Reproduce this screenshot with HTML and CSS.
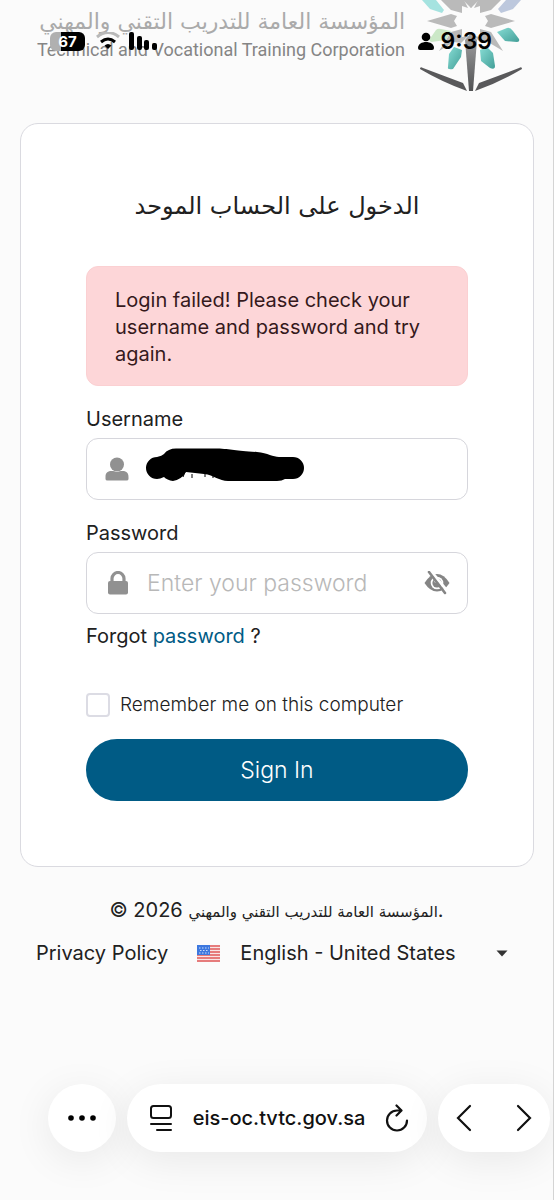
FILE: index.html
```html
<!DOCTYPE html>
<html lang="en">
<head>
<meta charset="utf-8">
<meta name="viewport" content="width=device-width, initial-scale=1">
<title>Sign In</title>
<link rel="stylesheet" href="styles.css">
</head>
<body class="page">
<div class="status-bar">
  <div class="status-left">
    <span class="battery">67</span>
    <svg class="wifi" width="24" height="18" viewBox="0 0 24 18" fill="none" stroke-width="3"><path d="M1 5Q12-4 23 5" stroke="#b9b9b9"/><path d="M5 10Q12 4 19 10" stroke="#000"/><path d="M8.500 13.500Q12 10.500 15.500 13.500L12 17z" fill="#000"/></svg>
    <svg class="signal" width="30" height="18" viewBox="0 0 30 18"><g fill="#000"><rect x="1" width="5" height="18" rx="2"/><rect x="9" y="4" width="5" height="14" rx="2"/><rect x="16" y="8" width="5" height="10" rx="2"/><rect x="24" y="11" width="5" height="7" rx="2"/></g></svg>
  </div>
  <div class="status-right">
    <svg width="16" height="18" viewBox="0 0 16 18"><circle cx="8" cy="5" r="4.300"/><path d="M0 16c0-8 16-8 16 0q0 2-2 2H2q-2 0-2-2z"/></svg>
    <span class="clock">9:39</span>
  </div>
</div>

<header class="site-header">
  <div class="org-name">
    <span class="org-ar" lang="ar" dir="rtl">المؤسسة العامة للتدريب التقني والمهني</span>
    <span class="org-en">Technical and Vocational Training Corporation</span>
  </div>
  <svg class="org-logo" width="104" height="92" viewBox="419 0 104 92" role="img" aria-label="TVTC logo">
    <defs>
      <linearGradient id="grey" x1="0" y1="0" x2="0" y2="1"><stop stop-color="#a5a5a6"/><stop offset="1" stop-color="#505153"/></linearGradient>
      <linearGradient id="teal" x1="0" y1="0" x2="1" y2="1"><stop stop-color="#87dcd4"/><stop offset="1" stop-color="#439f98"/></linearGradient>
      <g id="half" fill="#bababa">
        <path d="M515 21L491 14 485 16 488 21 485 26 491 28z"/>
        <path d="M501 0L491 10 480 13 480 6 474 8 478 0z"/>
        <path d="M480 29L491 32 503 51 488 42 481 43 474 36 480 37z"/>
        <path d="M471 8L468 3 471 0 479 0z"/>
      </g>
    </defs>
    <path d="M422 0h14l8 10-2 3-12-4z" fill="#a5e3e0"/>
    <path d="M506 0h15l-8 9-12 4-3-4z" fill="#bdc8dd"/>
    <use href="#half"/>
    <use href="#half" transform="translate(942 0) scale(-1 1)"/>
    <path d="M429 40l7-10q2-2 5-1l10 2-5 9-15 2z" fill="#cbe8c7"/>
    <path d="M497 32l10-4q3-1 6 3l6 8q1 3-2 3l-12-1z" fill="url(#teal)"/>
    <path d="M454 47l8 3-1 7-8 12q-6 1-5-2l1-13z" fill="url(#teal)"/>
    <path d="M487 47l6 6 2 13q0 4-5 2l-9-7-1-11z" fill="url(#teal)"/>
    <path d="M465 40l6-7 6 7-4 51h-4z" fill="url(#grey)"/>
    <path d="M420 69q0-3 3-1l40 15 4 8q-25-9-47-22zM522 69q0-3-3-1l-40 15-4 8q25-9 47-22z" fill="#59595b"/>
  </svg>
</header>

<main class="card">
  <h1 class="title" lang="ar" dir="rtl">الدخول على الحساب الموحد</h1>
  <form class="form">
    <p class="alert" role="alert">Login failed! Please check your username and password and try again.</p>
    <div class="group">
      <label for="user">Username</label>
      <div class="field">
        <svg class="field-icon" width="24" height="24" viewBox="0 0 24 24" fill="#919191"><circle cx="12" cy="7.500" r="7"/><path d="M.500 20c0-8 8-6 11.500-5 3.500-1 11.500-3 11.500 5v2q0 1.500-2 1.500h-19q-2 0-2-1.500z"/></svg>
        <input class="input" id="user" type="text">
        <svg class="redaction" width="160" height="34" viewBox="145 448 160 34"><path d="M157 457Q162 456 164 454 168 448.500 176 448.500H217C232 449 235 451 257 452 268 453 273 457 279 457H293A11 11 0 0 1 293 479H285Q282 481 277 481H228C219 481 214 475 204 474L186 472Q181 480 173 481 167 480 164 477 160 479 157 479A11 11 0 0 1 157 457z"/><path d="M183 477l2-5M192 478v-4M205 477v-3M213 478v-2" stroke="#000"/></svg>
      </div>
    </div>
    <div class="group">
      <label for="pass">Password</label>
      <div class="field">
        <svg class="field-icon" width="24" height="24" viewBox="0 0 24 24"><path d="M7 11V7.500a6 6 0 0 1 12 0V11" fill="none" stroke="#919191" stroke-width="3.200"/><rect x="3" y="10" width="20" height="13.500" rx="2" fill="#919191"/></svg>
        <input class="input" id="pass" type="password" placeholder="Enter your password">
        <button class="reveal" type="button" aria-label="Show password">
          <svg width="26" height="24" viewBox="0 0 26 24"><path d="M.500 12Q6 3 13 3t12.500 9Q20 20.500 13 20.500T.500 12z" fill="#858585"/><circle cx="13" cy="12" r="6.300" fill="#fff"/><circle cx="13" cy="12" r="4.600" fill="#858585"/><circle cx="12" cy="10" r="1.800" fill="#fff"/><path d="M6-1l18 22" stroke="#fff" stroke-width="3"/><path d="M5 1l16 21" stroke="#858585" stroke-width="2.600" stroke-linecap="round"/></svg>
        </button>
      </div>
      <p class="forgot">Forgot <a href="#reset">password</a> ?</p>
    </div>
    <div class="remember">
      <input class="check" type="checkbox" id="remember">
      <label for="remember">Remember me on this computer</label>
    </div>
    <button class="submit" type="submit">Sign In</button>
  </form>
</main>

<footer class="footer">
  <p class="copyright">© 2026 <span class="copy-ar" lang="ar">المؤسسة العامة للتدريب التقني والمهني</span>.</p>
  <div class="footer-row">
    <a class="privacy" href="#privacy">Privacy Policy</a>
    <svg class="flag" width="23" height="17" viewBox="0 0 23 17"><path d="M0 0h23v17H0z" fill="#f9e5e5"/><path d="M0 1h23M0 4h23M0 7h23M0 10h23M0 13h23M0 16h23" stroke="#e05a5a" stroke-width="1.600"/><path d="M0 0h13v10H0z" fill="#3d78df"/><path d="M2 3h10M3 5.500h9M2 8h10" stroke="#c9dcfa" stroke-dasharray="1.500 1.500"/></svg>
    <div class="language">
      <select class="language-select" aria-label="Language"><option>English - United States</option></select>
      <svg class="caret" width="12" height="7" viewBox="0 0 12 7"><path d="M.500.500h11L6 6.500z" fill="#333"/></svg>
    </div>
  </div>
</footer>

<nav class="browser-bar" aria-label="Browser">
  <button class="pill more" type="button" aria-label="More"><svg width="28" height="6" viewBox="0 0 28 6"><circle cx="3" cy="3" r="2.800"/><circle cx="14" cy="3" r="2.800"/><circle cx="25" cy="3" r="2.800"/></svg></button>
  <div class="pill address">
    <button class="plain" type="button" aria-label="Page menu"><svg width="24" height="28" viewBox="0 0 24 28" fill="none" stroke="#111" stroke-width="2" stroke-linecap="round"><rect x="2" y="2" width="20" height="12" rx="2.500"/><path d="M2 20h20M8 26h14"/></svg></button>
    <span class="url">eis-oc.tvtc.gov.sa</span>
    <button class="plain" type="button" aria-label="Reload"><svg width="24" height="28" viewBox="0 0 24 28" fill="none" stroke="#111" stroke-width="2.200" stroke-linecap="round" stroke-linejoin="round"><path d="M15.500 6.500H12A10 10 0 1 0 22 16.500M11.500 1.500l5 5-5 5"/></svg></button>
  </div>
  <div class="pill arrows">
    <button class="plain" type="button" aria-label="Back"><svg width="16" height="28" viewBox="0 0 16 28"><path d="M14 2L2 14l12 12" fill="none" stroke="#111" stroke-width="2.200" stroke-linecap="round"/></svg></button>
    <button class="plain" type="button" aria-label="Forward"><svg width="16" height="28" viewBox="0 0 16 28"><path d="M2 2l12 12L2 26" fill="none" stroke="#111" stroke-width="2.200" stroke-linecap="round"/></svg></button>
  </div>
</nav>
</body>
</html>
```
FILE: styles.css
```css
* { box-sizing: border-box; }

.page {
  position: relative;
  display: flex;
  flex-direction: column;
  min-height: 100vh;
  margin: 0;
  overflow-x: hidden;
  border-right: 1px solid #d4d4d4;
  background: #fbfbfb;
  color: #212121;
  font: 400 20px/27px Inter, "DejaVu Sans", sans-serif;
}

button, input, select { font: inherit; color: inherit; }
button { cursor: pointer; }
h1, p { margin: 0; }
svg { flex: none; }

/* Phone status bar, drawn over the scrolled header */
.status-bar {
  position: absolute;
  z-index: 2;
  inset: 28px 61px auto 50px;
  display: flex;
  justify-content: space-between;
  height: 26px;
}
.status-left, .status-right { display: flex; align-items: center; }
.battery {
  width: 35px;
  border-radius: 6px;
  background: linear-gradient(90deg, #b0b0b0 11px, #000 11px);
  color: #fff;
  font: bold 15px/19px Inter, sans-serif;
  text-align: center;
}
.wifi { margin-left: 11px; }
.signal { margin-left: 8px; }
.status-right { gap: 7px; }
.clock { font: 600 23px/26px Inter, sans-serif; color: #000; }

.site-header {
  display: flex;
  justify-content: flex-end;
  gap: 14px;
  padding-right: 30px;
}
.org-name {
  display: flex;
  flex-direction: column;
  padding-top: 8px;
  white-space: nowrap;
}
.org-ar { color: #aaa; font: 22px/28px "DejaVu Sans", sans-serif; }
.org-en { color: #858585; font: 18px/28px Roboto, sans-serif; text-align: right; }

.card {
  margin: 31px 19px 0 20px;
  padding: 64px 65px 65px;
  border: 1px solid #dadae0;
  border-radius: 18px;
  background: #fff;
}
.title {
  margin-bottom: 42px;
  font: 400 24px/36px "DejaVu Sans", sans-serif;
  text-align: center;
}
.form { display: flex; flex-direction: column; }
.alert {
  padding: 20px 28px 17px;
  border: 1px solid #fbd0d2;
  border-radius: 12px;
  background: #fdd6d8;
  color: #35191c;
}
.group { display: flex; flex-direction: column; gap: 5px; margin-top: 20px; }
.field {
  position: relative;
  display: flex;
  align-items: center;
  height: 62px;
  padding: 0 17px 0 18px;
  border: 1px solid #d6d6dc;
  border-radius: 12px;
}
.input {
  flex: 1;
  min-width: 0;
  height: 100%;
  padding: 0 18px;
  border: 0;
  outline: 0;
  background: none;
  font-size: 23px;
  font-weight: 300;
}
.input::placeholder { color: #b8b8b8; opacity: 1; }
.redaction { position: absolute; left: 58px; top: 9px; }
.reveal { display: flex; padding: 0; border: 0; background: none; }
.forgot { margin-top: 4px; }
.forgot a { color: #005b85; text-decoration: none; }
.remember {
  display: flex;
  align-items: center;
  gap: 10px;
  margin: 41px 0 21px;
  font-size: 19px;
  font-weight: 300;
}
.check {
  appearance: none;
  width: 24px;
  height: 24px;
  margin: 0;
  border: 2px solid #dcdce4;
  border-radius: 4px;
  background: #fff;
}
.submit {
  height: 62px;
  border: 0;
  border-radius: 31px;
  background: #005b85;
  color: #fff;
  font-size: 23px;
  font-weight: 300;
}

.footer { margin-top: 30px; }
.copyright { text-align: center; }
.copy-ar { font: 15px/27px "DejaVu Sans", sans-serif; }
.footer-row {
  display: flex;
  align-items: center;
  margin-top: 14px;
  padding: 0 45px 0 36px;
}
.privacy { color: inherit; text-decoration: none; white-space: nowrap; }
.flag { margin: 0 20px 0 29px; }
.language { position: relative; display: flex; flex: 1; align-items: center; }
.language-select {
  appearance: none;
  width: 100%;
  padding: 0;
  border: 0;
  background: none;
}
.caret { position: absolute; right: 0; pointer-events: none; }

.browser-bar {
  display: flex;
  gap: 11px;
  margin-top: auto;
  padding: 0 3px 48px 48px;
}
.pill {
  display: flex;
  align-items: center;
  height: 68px;
  border: 0;
  border-radius: 34px;
  background: #fff;
  box-shadow: 0 8px 40px rgba(0, 0, 0, 0.08);
}
.more { justify-content: center; width: 68px; padding: 0; }
.address { flex: 1; justify-content: space-between; padding: 0 18px 0 22px; }
.url { color: #111; font: 500 20px/27px Inter, sans-serif; }
.arrows { justify-content: space-between; width: 112px; padding: 0 18px; }
.plain { display: flex; padding: 0; border: 0; background: none; }
```
